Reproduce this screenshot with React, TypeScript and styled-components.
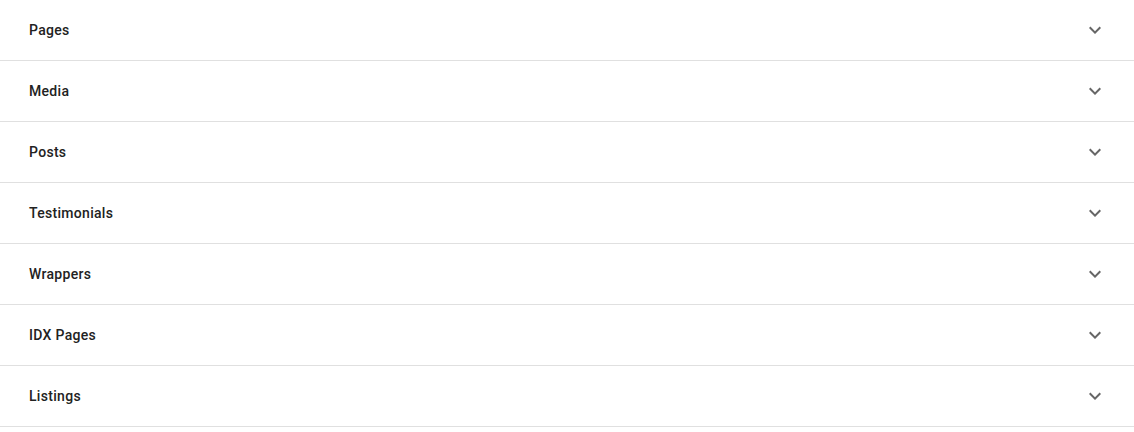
import { FC } from 'react';
import styled, { createGlobalStyle } from 'styled-components';

const GlobalStyle = createGlobalStyle`
    body {
        margin: 0;
        background: #ffffff;
        font-family: Roboto, "Liberation Sans", sans-serif;
    }
`;

const List = styled.div`
    display: flex;
    flex-direction: column;
    width: 100%;
`;

const Row = styled.div`
    display: flex;
    justify-content: space-between;
    align-items: center;
    height: 60px;
    padding: 0 27px 0 29px;
    border-bottom: 1px solid #e0e0e0;
    cursor: pointer;
`;

const Title = styled.span`
    font-size: 14px;
    font-weight: 500;
    color: #222222;
    letter-spacing: 0.3px;
`;

const Chevron = styled.svg`
    width: 24px;
    height: 24px;
    fill: #666666;
`;

const sections = ['Pages', 'Media', 'Posts', 'Testimonials', 'Wrappers', 'IDX Pages', 'Listings'];

const App: FC = () => {
    return (
        <>
            <GlobalStyle />
            <List>
                {sections.map((name) => (
                    <Row key={name}>
                        <Title>{name}</Title>
                        <Chevron viewBox="0 0 24 24">
                            <path d="M16.59 8.59L12 13.17 7.41 8.59 6 10l6 6 6-6z" />
                        </Chevron>
                    </Row>
                ))}
            </List>
        </>
    );
};

export default App;
